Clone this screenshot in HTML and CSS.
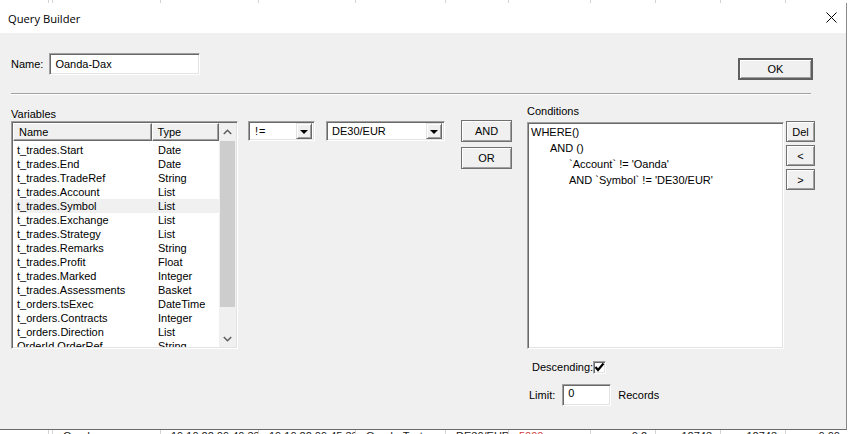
FILE: index.html
```html
<!DOCTYPE html>
<html lang="en">
<head>
    <meta charset="UTF-8">
    <meta name="viewport" content="width=device-width, initial-scale=1.0">
    <title>Query Builder</title>
    <link rel="stylesheet" href="styles.css">
</head>
<body>
    <!-- spreadsheet rows peeking out behind the dialog -->
    <div class="sheet sheet-top">
        <div class="sheet-row">
            <span></span><span></span><span>Oanda</span><span>17.10.22 11:30:14</span><span>17.10.22 11:40:10</span>
            <span>Oanda-Test</span><span>DE30/EUR</span><span class="red">5000</span><span class="num">0.2</span>
            <span class="num">12430.0</span><span class="num">12480.1</span><span class="num">0.00</span>
        </div>
    </div>

    <div class="dialog">
        <div class="titlebar">
            <span class="title">Query Builder</span>
            <svg class="close" width="11" height="11" viewBox="0 0 11 11">
                <path d="M0.5 0.5 L10.5 10.5 M10.5 0.5 L0.5 10.5" stroke="#000" stroke-width="1" fill="none"/>
            </svg>
        </div>

        <div class="content">
            <div class="head">
                <div class="name-row">
                    <span>Name:</span>
                    <div class="field name-field">Oanda-Dax</div>
                </div>
                <button class="btn ok-btn">OK</button>
            </div>

            <div class="sep"></div>

            <div class="main">
                <!-- Variables -->
                <div class="vars">
                    <div class="caption">Variables</div>
                    <div class="listbox">
                        <div class="list">
                            <div class="list-head">
                                <span class="col-name">Name</span>
                                <span class="col-type">Type</span>
                            </div>
                            <div class="rows">
                                <div class="row"><span class="col-name">t_trades.Start</span><span class="col-type">Date</span></div>
                                <div class="row"><span class="col-name">t_trades.End</span><span class="col-type">Date</span></div>
                                <div class="row"><span class="col-name">t_trades.TradeRef</span><span class="col-type">String</span></div>
                                <div class="row"><span class="col-name">t_trades.Account</span><span class="col-type">List</span></div>
                                <div class="row hover"><span class="col-name">t_trades.Symbol</span><span class="col-type">List</span></div>
                                <div class="row"><span class="col-name">t_trades.Exchange</span><span class="col-type">List</span></div>
                                <div class="row"><span class="col-name">t_trades.Strategy</span><span class="col-type">List</span></div>
                                <div class="row"><span class="col-name">t_trades.Remarks</span><span class="col-type">String</span></div>
                                <div class="row"><span class="col-name">t_trades.Profit</span><span class="col-type">Float</span></div>
                                <div class="row"><span class="col-name">t_trades.Marked</span><span class="col-type">Integer</span></div>
                                <div class="row"><span class="col-name">t_trades.Assessments</span><span class="col-type">Basket</span></div>
                                <div class="row"><span class="col-name">t_orders.tsExec</span><span class="col-type">DateTime</span></div>
                                <div class="row"><span class="col-name">t_orders.Contracts</span><span class="col-type">Integer</span></div>
                                <div class="row"><span class="col-name">t_orders.Direction</span><span class="col-type">List</span></div>
                                <div class="row"><span class="col-name">OrderId.OrderRef</span><span class="col-type">String</span></div>
                            </div>
                        </div>
                        <div class="scrollbar">
                            <div class="arrow">
                                <svg width="9" height="6" viewBox="0 0 9 6"><path d="M0.8 5 L4.5 1.3 L8.2 5" stroke="#606060" stroke-width="1.6" fill="none"/></svg>
                            </div>
                            <div class="track"><div class="thumb"></div></div>
                            <div class="arrow">
                                <svg width="9" height="6" viewBox="0 0 9 6"><path d="M0.8 1 L4.5 4.7 L8.2 1" stroke="#606060" stroke-width="1.6" fill="none"/></svg>
                            </div>
                        </div>
                    </div>
                </div>

                <!-- Operator / value pickers -->
                <div class="ops">
                    <div class="combo op-combo">
                        <span class="combo-text">!=</span>
                        <span class="drop"><i class="tri"></i></span>
                    </div>
                    <div class="combo val-combo">
                        <span class="combo-text">DE30/EUR</span>
                        <span class="drop"><i class="tri"></i></span>
                    </div>
                    <div class="logic-btns">
                        <button class="btn logic-btn">AND</button>
                        <button class="btn logic-btn">OR</button>
                    </div>
                </div>

                <!-- Conditions -->
                <div class="conds">
                    <div class="caption cond-caption">Conditions</div>
                    <div class="cond-row">
                        <div class="cond-box">
                            <div class="line">WHERE()</div>
                            <div class="line indent-1">AND ()</div>
                            <div class="line indent-2">`Account` != 'Oanda'</div>
                            <div class="line indent-2">AND `Symbol` != 'DE30/EUR'</div>
                        </div>
                        <div class="side-btns">
                            <button class="btn side-btn">Del</button>
                            <button class="btn side-btn">&lt;</button>
                            <button class="btn side-btn">&gt;</button>
                        </div>
                    </div>
                    <div class="opt-row desc-row">
                        <span>Descending:</span>
                        <span class="checkbox">
                            <svg width="11" height="11" viewBox="0 0 11 11"><path d="M1.5 5 L4 8 L9.5 1.5" stroke="#000" stroke-width="2.2" fill="none"/></svg>
                        </span>
                    </div>
                    <div class="opt-row limit-row">
                        <span>Limit:</span>
                        <div class="field limit-field">0</div>
                        <span>Records</span>
                    </div>
                </div>
            </div>
        </div>
    </div>

    <div class="sheet sheet-bottom">
        <div class="sheet-row">
            <span></span><span></span><span>Oanda</span><span>19.10.22 09:40:33</span><span>19.10.22 09:45:33</span>
            <span>Oanda-Test</span><span>DE30/EUR</span><span class="red">5000</span><span class="num">0.2</span>
            <span class="num">12743</span><span class="num">12743</span><span class="num">0.00</span>
        </div>
    </div>
</body>
</html>
```

FILE: styles.css
```css
/* Basic Reset */
* {
    margin: 0;
    padding: 0;
    box-sizing: border-box;
}

body {
    width: 848px;
    height: 434px;
    overflow: hidden;
    background: #fff;
    font-family: 'Liberation Sans', Arial, sans-serif;
    font-size: 11px;
    color: #000;
}

/* Background spreadsheet */
.sheet {
    overflow: hidden;
    background: #fff;
}

.sheet-top {
    height: 3px;
}

.sheet-top .sheet-row {
    margin-top: -11px;
}

.sheet-bottom {
    height: 5px;
}

.sheet-bottom .sheet-row {
    margin-top: -1px;
}

.sheet-row {
    display: grid;
    grid-template-columns: 48px 4px 108px 98px 97px 90px 63px 82px 65px 65px 65px 63px;
    height: 14px;
    line-height: 14px;
    color: #1a1a1a;
}

.sheet-row span {
    border-left: 1px solid #d4d4d4;
    padding-left: 10px;
    white-space: nowrap;
    overflow: hidden;
}

.sheet-row span:first-child {
    border-left: none;
}

.sheet-row .num {
    text-align: right;
    padding-right: 8px;
}

.sheet-row .red {
    color: #d04040;
}

/* Dialog window */
.dialog {
    width: 847px;
    height: 427px;
    border-right: 1px solid #8a8a8a;
    border-bottom: 1px solid #6b6b6b;
    display: flex;
    flex-direction: column;
}

.titlebar {
    height: 30px;
    background: #fff;
    display: flex;
    align-items: center;
    justify-content: space-between;
    padding: 0 9px 0 8px;
}

.title {
    font-family: 'Open Sans', 'Noto Sans', sans-serif;
    font-size: 11.2px;
    color: #000;
}

.close {
    margin-top: -2px;
}

.content {
    flex: 1;
    background: #f0f0f0;
    padding: 20px 33px 0 11px;
}

/* Name + OK */
.head {
    display: flex;
    justify-content: space-between;
    align-items: flex-start;
}

.name-row {
    display: flex;
    align-items: center;
    gap: 6px;
    height: 22px;
}

.field {
    background: #fff;
    border: 1px solid;
    border-color: #a0a0a0 #fff #fff #a0a0a0;
    box-shadow: inset 1px 1px #696969, inset -1px -1px #e3e3e3;
    height: 22px;
    padding: 0 5px;
    line-height: 20px;
}

.name-field {
    width: 151px;
}

.btn {
    font-family: 'Liberation Sans', Arial, sans-serif;
    font-size: 11px;
    color: #000;
    background: #f0f0f0;
    border: 1px solid #707070;
    box-shadow: inset 1px 1px #fff, inset -1px -1px #a0a0a0;
    cursor: pointer;
}

.ok-btn {
    width: 75px;
    height: 22px;
    margin-top: 5px;
    border: 2px solid #5f5f5f;
    box-shadow: inset 1px 1px #fff, inset -1px -1px #a0a0a0;
}

.sep {
    margin: 13px 2px 0 0;
    border-top: 1px solid #a0a0a0;
    border-bottom: 1px solid #fff;
}

/* Main area */
.main {
    display: flex;
    align-items: flex-start;
    margin-top: 13px;
}

.caption {
    line-height: 13px;
    height: 13px;
}

/* Variables list */
.vars {
    width: 227px;
}

.listbox {
    height: 228px;
    display: flex;
    background: #fff;
    border: 1px solid;
    border-color: #a0a0a0 #fff #fff #a0a0a0;
    box-shadow: inset 1px 1px #696969, inset -1px -1px #e3e3e3;
    padding: 1px;
    overflow: hidden;
}

.list {
    width: 207px;
    overflow: hidden;
}

.list-head {
    display: flex;
    height: 18px;
    line-height: 16px;
    background: #f0f0f0;
}

.list-head span {
    border: 1px solid;
    border-color: #fff #696969 #696969 #fff;
    box-shadow: inset -1px -1px #a0a0a0;
}

.list-head .col-name {
    width: 140px;
    padding-left: 5px;
}

.list-head .col-type {
    width: 67px;
    padding-left: 4px;
}

.rows {
    padding-top: 2px;
}

.row {
    display: flex;
    height: 14px;
    line-height: 14px;
    white-space: nowrap;
}

.row .col-name {
    width: 140px;
    padding-left: 4px;
}

.row .col-type {
    padding-left: 5px;
}

.row.hover {
    background: #f0f0f0;
    margin-left: 2px;
}

.row.hover .col-name {
    width: 138px;
    padding-left: 2px;
}

.scrollbar {
    width: 17px;
    display: flex;
    flex-direction: column;
    background: #f0f0f0;
}

.arrow {
    height: 17px;
    display: flex;
    align-items: center;
    justify-content: center;
}

.track {
    flex: 1;
    padding: 1px;
}

.thumb {
    height: 166px;
    background: #cdcdcd;
}

/* Combos */
.ops {
    display: flex;
    align-items: flex-start;
    margin-left: 10px;
    padding-top: 13px;
}

.combo {
    height: 20px;
    display: flex;
    align-items: center;
    justify-content: space-between;
    background: #fff;
    border: 1px solid;
    border-color: #a0a0a0 #fff #fff #a0a0a0;
    box-shadow: inset 1px 1px #696969, inset -1px -1px #e3e3e3;
    padding: 1px 2px 1px 1px;
}

.combo-text {
    padding-left: 5px;
}

.op-combo {
    width: 67px;
}

.op-combo .combo-text {
    letter-spacing: 1px;
}

.val-combo {
    width: 119px;
    margin-left: 11px;
}

.val-combo .combo-text {
    padding-left: 4px;
}

.drop {
    width: 16px;
    height: 16px;
    background: #f0f0f0;
    border: 1px solid;
    border-color: #e3e3e3 #696969 #696969 #e3e3e3;
    box-shadow: inset 1px 1px #fff, inset -1px -1px #a0a0a0;
    display: flex;
    align-items: center;
    justify-content: center;
}

.tri {
    width: 0;
    height: 0;
    border-left: 4px solid transparent;
    border-right: 4px solid transparent;
    border-top: 4px solid #000;
    margin-top: 1px;
}

.logic-btns {
    display: flex;
    flex-direction: column;
    gap: 5px;
    margin-left: 16px;
    margin-top: -1px;
}

.logic-btn {
    width: 51px;
    height: 22px;
}

/* Conditions */
.conds {
    margin-left: 15px;
    margin-top: -3px;
}

.cond-caption {
    margin-bottom: 4px;
}

.cond-row {
    display: flex;
    align-items: flex-start;
}

.cond-box {
    width: 257px;
    height: 227px;
    background: #fff;
    border: 1px solid;
    border-color: #a0a0a0 #fff #fff #a0a0a0;
    box-shadow: inset 1px 1px #696969, inset -1px -1px #e3e3e3;
    padding: 2px 0 0 3px;
}

.line {
    height: 16px;
    line-height: 14px;
    white-space: nowrap;
}

.indent-1 {
    padding-left: 19px;
}

.indent-2 {
    padding-left: 38px;
}

.side-btns {
    display: flex;
    flex-direction: column;
    gap: 3px;
    margin-left: 2px;
    margin-top: -1px;
}

.side-btn {
    width: 29px;
    height: 21px;
}

.opt-row {
    display: flex;
    align-items: center;
}

.desc-row {
    margin-top: 12px;
    height: 12px;
    padding-left: 5px;
}

.checkbox {
    width: 13px;
    height: 13px;
    background: #fff;
    border: 1px solid;
    border-color: #a0a0a0 #fff #fff #a0a0a0;
    box-shadow: inset 1px 1px #696969, inset -1px -1px #e3e3e3;
    display: flex;
    align-items: center;
    justify-content: center;
}

.limit-row {
    margin-top: 11px;
    padding-left: 2px;
    gap: 7px;
}

.limit-field {
    width: 49px;
    line-height: 16px;
    padding-left: 5px;
}
```
